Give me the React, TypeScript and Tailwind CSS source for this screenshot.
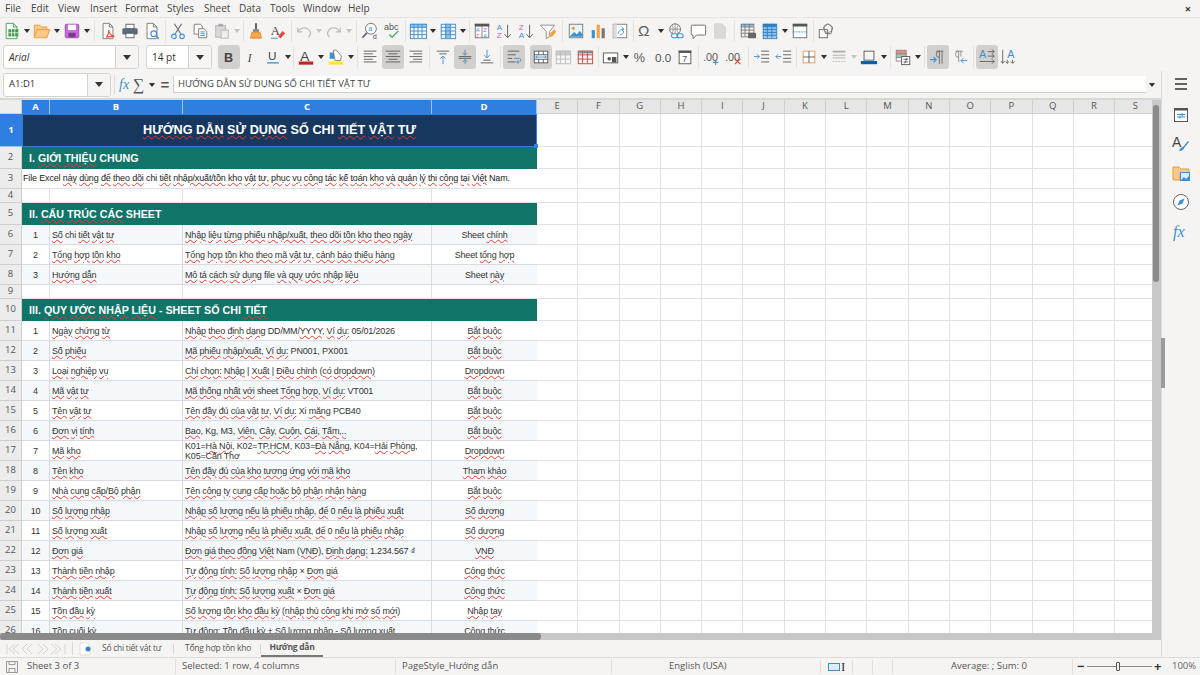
import type { ReactNode } from 'react'

const BLUE = '#3d8fd1'
const GRAY = '#5a5a5a'
const LIGHT = '#bdbdbd'

function Lines({ ys, x1, x2, c = GRAY }: { ys: number[]; x1: number[]; x2: number[]; c?: string }) {
  return (
    <>
      {ys.map((y, i) => (
        <line key={y} x1={x1[i % x1.length]} x2={x2[i % x2.length]} y1={y} y2={y} stroke={c} strokeWidth="1" />
      ))}
    </>
  )
}

function Tbl({ x, y, w, h, c, nx, ny, top }: { x: number; y: number; w: number; h: number; c: string; nx: number; ny: number; top?: string }) {
  const xs = Array.from({ length: nx - 1 }, (_, i) => x + ((i + 1) * w) / nx)
  const ys = Array.from({ length: ny - 1 }, (_, i) => y + ((i + 1) * h) / ny)
  return (
    <g fill="none" stroke={c} strokeWidth="1">
      {top && <rect x={x} y={y} width={w} height={h / ny} fill={top} stroke="none" />}
      <rect x={x + 0.5} y={y + 0.5} width={w} height={h} />
      {xs.map(v => <line key={v} x1={v} x2={v} y1={y} y2={y + h} />)}
      {ys.map(v => <line key={v} x1={x} x2={x + w} y1={v} y2={v} />)}
    </g>
  )
}

const Doc = ({ c = GRAY }: { c?: string }) => <path d="M4.5 1.5h7l4 4v13h-11z M11.5 1.5v4h4" fill="#fff" stroke={c} />

const icons: Record<string, ReactNode> = {
  new: (<><path d="M3.5 1.5h8l4 4v13h-12z M11.5 1.5v4h4" fill="#fff" stroke="#3f9e4d" /><rect x="6" y="8" width="11" height="8" fill="#3f9e4d" /><path d="M9.5 8v8M13 8v8M6 12h11" stroke="#fff" strokeWidth=".8" /></>),
  open: (<path d="M1.5 5.5v-2h6l2 2h6v3h3l-3 9h-14z M1.5 17l3-8.5h14" fill="#f9c98b" stroke="#ee9a3d" />),
  save: (<><rect x="2.5" y="2.5" width="15" height="15" rx="1" fill="#c46bd4" stroke="#a34fb6" /><rect x="5.5" y="3" width="9" height="6" fill="#fff" /><rect x="6" y="12" width="8" height="5" fill="#7d3a8e" /></>),
  pdf: (<><Doc c="#777" /><path d="M8 17c2-2 3-5 3-8 0 3 2 6 6 7-3 0-6 0-9 1z" fill="none" stroke="#e04a3f" strokeWidth="1.2" /></>),
  print: (<><rect x="5.5" y="2.5" width="9" height="5" fill="#fff" stroke={GRAY} /><rect x="1.5" y="7" width="17" height="7" rx="1.5" fill="#5d6a78" /><rect x="5.5" y="12.5" width="9" height="5" fill="#fff" stroke={GRAY} /></>),
  preview: (<><Doc c="#777" /><circle cx="12" cy="13" r="3.2" fill="#fff" stroke={BLUE} strokeWidth="1.3" /><path d="M14.5 15.5l3 3" stroke={BLUE} strokeWidth="1.5" /></>),
  cut: (<><path d="M6 2l7 11M14 2l-7 11" stroke="#667" strokeWidth="1.2" /><circle cx="5.5" cy="16" r="2.5" fill="none" stroke={BLUE} strokeWidth="1.2" /><circle cx="14.5" cy="16" r="2.5" fill="none" stroke={BLUE} strokeWidth="1.2" /></>),
  copy: (<><path d="M3.5 2.5h7l2 2v9h-9z" fill="#fff" stroke="#777" /><path d="M8.5 7.5h6l3 3v7h-9z" fill="#fff" stroke="#777" /><Lines ys={[11, 13, 15]} x1={[10.5]} x2={[15.5]} c={BLUE} /></>),
  paste: (<><rect x="3" y="4" width="11" height="13" fill="#d8d8d8" stroke="#b5b5b5" /><rect x="6" y="2" width="5" height="3" fill="#aaa" /><rect x="9" y="9" width="8" height="9" fill="#eee" stroke="#b5b5b5" /></>),
  clone: (<><path d="M10 1.5v7" stroke="#555" strokeWidth="2" /><rect x="6.5" y="8" width="7" height="3" fill="#888" /><path d="M5.5 11.5h9l1.5 6.5h-12z" fill="#f4a94e" stroke="#e08a2c" /></>),
  clear: (<><text x="2" y="14" fontSize="14" fill="#444" fontFamily="Liberation Serif, serif">A</text><path d="M10 16l5-6 3 2.5-5 5.5z" fill="#e2453c" /><path d="M2 18h8" stroke={BLUE} /></>),
  undo: (<path d="M3 6v5h5M3.5 10.5C7 5 14 5 17 11c.7 2 0 4-2 6" fill="none" stroke={LIGHT} strokeWidth="1.3" />),
  redo: (<path d="M17 6v5h-5M16.5 10.5C13 5 6 5 3 11c-.7 2 0 4 2 6" fill="none" stroke={LIGHT} strokeWidth="1.3" />),
  find: (<><circle cx="11" cy="7.5" r="6" fill="#fff" stroke="#667" /><path d="M6.5 12l-5 5.5" stroke="#667" strokeWidth="2" /><text x="8" y="10.5" fontSize="8" fill={BLUE} fontFamily="Liberation Sans, sans-serif">a</text><text x="13" y="19" fontSize="8" fill="#555" fontFamily="Liberation Sans, sans-serif">d</text></>),
  spell: (<><text x="1" y="9" fontSize="10" fill="#555" fontFamily="Liberation Sans, sans-serif">abc</text><path d="M7 14l3 3 7-7" fill="none" stroke="#4caf6e" strokeWidth="1.5" /></>),
  rows: (<Tbl x={1} y={2} w={18} h={16} c={BLUE} nx={4} ny={4} top="#8fc3ec" />),
  cols: (<><rect x="7" y="2" width="6" height="16" fill="#8fc3ec" /><Tbl x={2} y={2} w={16} h={16} c={BLUE} nx={3} ny={4} /></>),
  sort: (<><rect x="2.5" y="2.5" width="15" height="15" fill="#fff" stroke="#777" /><rect x="2" y="2" width="16" height="3" fill="#555" /><path d="M10 5v13" stroke="#777" /><text x="3" y="11" fontSize="6.5" fill={BLUE} fontFamily="Liberation Sans, sans-serif">A</text><text x="3" y="17.5" fontSize="6.5" fill="#c65bd0" fontFamily="Liberation Sans, sans-serif">Z</text><text x="11.5" y="11" fontSize="6.5" fill="#c65bd0" fontFamily="Liberation Sans, sans-serif">Z</text><text x="11.5" y="17.5" fontSize="6.5" fill={BLUE} fontFamily="Liberation Sans, sans-serif">A</text></>),
  asc: (<><text x="2" y="9" fontSize="9" fill={BLUE} fontFamily="Liberation Sans, sans-serif">A</text><text x="2" y="18" fontSize="9" fill="#c65bd0" fontFamily="Liberation Sans, sans-serif">Z</text><path d="M14 3v14M10.5 13.5l3.5 4 3.5-4" fill="none" stroke={GRAY} /></>),
  desc: (<><text x="2" y="9" fontSize="9" fill="#c65bd0" fontFamily="Liberation Sans, sans-serif">Z</text><text x="2" y="18" fontSize="9" fill={BLUE} fontFamily="Liberation Sans, sans-serif">A</text><path d="M14 3v14M10.5 13.5l3.5 4 3.5-4" fill="none" stroke={GRAY} /></>),
  filter: (<><path d="M1.5 3.5h16l-6 7v6l-3.5 2v-8z" fill="#fff" stroke="#888" /><path d="M17 8l-5 5-1 4 4-1 4-5z" fill="#f0a33e" /></>),
  image: (<><rect x="2.5" y="2.5" width="15" height="15" fill="#eaf4fb" stroke="#777" /><circle cx="7" cy="7" r="1.8" fill="#f0a33e" /><path d="M3 16l5-5 3 3 3-4 3.5 4v2.5h-14.5z" fill={BLUE} /></>),
  chart: (<><rect x="3" y="9" width="3.5" height="9" fill={BLUE} /><rect x="8.5" y="3" width="3.5" height="15" fill="#f0a33e" /><rect x="14" y="7" width="3.5" height="11" fill="#777" /></>),
  pivot: (<><rect x="2.5" y="2.5" width="15" height="15" fill="#fff" stroke="#777" /><rect x="2.5" y="2.5" width="4" height="15" fill="#ddd" /><path d="M8 13c0-3 3-5 6-5M12 6l2.5 2-2.5 2M14 10c0 3-2 4-4 4" fill="none" stroke={BLUE} /></>),
  omega: (<text x="1" y="16" fontSize="17" fill={GRAY} fontFamily="Liberation Sans, sans-serif">Ω</text>),
  link: (<><circle cx="9" cy="8" r="6" fill="#fff" stroke="#666" /><path d="M3 8h12M9 2v12M5.5 3.5c2 3 2 6 0 9M12.5 3.5c-2 3-2 6 0 9" fill="none" stroke="#666" strokeWidth=".7" /><rect x="5" y="13" width="7" height="4.5" rx="2.2" fill="#fff" stroke={BLUE} strokeWidth="1.2" /><rect x="11" y="13" width="7" height="4.5" rx="2.2" fill="none" stroke={BLUE} strokeWidth="1.2" /></>),
  comment: (<path d="M3.5 3.5h14a1 1 0 0 1 1 1v9a1 1 0 0 1-1 1h-9l-4 4v-4h-1a1 1 0 0 1-1-1v-9a1 1 0 0 1 1-1z" fill="#fff" stroke="#666" />),
  note: (<path d="M4 2h8l4 4v12h-12z" fill="#d9d9d9" stroke="#d0d0d0" />),
  printarea: (<><Tbl x={2} y={2} w={14} h={14} c="#777" nx={3} ny={4} top="#8fc3ec" /><rect x="10" y="12" width="9" height="6" rx="1" fill="#666" /></>),
  freeze: (<><rect x="2.5" y="2.5" width="15" height="15" fill="#8fc3ec" /><Tbl x={2} y={2} w={15} h={16} c="#2f7fbf" nx={3} ny={5} /><rect x="2" y="2" width="15" height="3" fill="#2f7fbf" /></>),
  split: (<><rect x="2.5" y="2.5" width="15" height="15" fill="#fff" stroke="#666" /><rect x="2" y="2" width="16" height="3" fill="#555" /><path d="M2 11h16" stroke={BLUE} strokeDasharray="2 1" /></>),
  shapes: (<><rect x="2.5" y="8.5" width="9" height="9" fill="#fff" stroke="#666" /><path d="M12 2l5.5 4-2 7h-6l-2-7z" fill="none" stroke="#666" /><circle cx="12" cy="7" r="4.5" fill="none" stroke="#888" /></>),
  italic: (<text x="6" y="15" fontSize="14" fontStyle="italic" fill="#555" fontFamily="Liberation Serif, serif">I</text>),
  bold: (<text x="4.5" y="15" fontSize="14" fontWeight="700" fill="#444" fontFamily="Liberation Sans, sans-serif">B</text>),
  under: (<><text x="4.5" y="13.5" fontSize="13" fill="#444" fontFamily="Liberation Sans, sans-serif">U</text><path d="M3.5 16.5h13" stroke={BLUE} strokeWidth="1.5" /></>),
  color: (<><text x="3.5" y="14" fontSize="15" fill="#444" fontFamily="Liberation Sans, sans-serif">A</text><rect x="2" y="15" width="16" height="3.5" fill="#c9211e" /></>),
  hl: (<><path d="M3 5h5v7H3z" fill={BLUE} /><path d="M7 3l3-1 6 7-1 5h-6z" fill="#fff" stroke="#777" /><rect x="2" y="15" width="16" height="3.5" fill="#ffe91a" /></>),
  left: (<Lines ys={[3.5, 6.5, 9.5, 12.5, 15.5]} x1={[2]} x2={[16, 12, 16, 12, 16]} />),
  center: (<Lines ys={[3.5, 6.5, 9.5, 12.5, 15.5]} x1={[2, 5]} x2={[18, 15]} />),
  right: (<Lines ys={[3.5, 6.5, 9.5, 12.5, 15.5]} x1={[4, 8]} x2={[18]} />),
  top: (<><Lines ys={[3.5, 6.5]} x1={[3, 6]} x2={[17, 14]} /><path d="M10 18V9M7 12l3-3 3 3" fill="none" stroke={BLUE} /></>),
  mid: (<><Lines ys={[9.5, 11.5]} x1={[3]} x2={[17]} /><path d="M10 2v6M7.5 5.5l2.5 2.5 2.5-2.5M10 18v-5M7.5 15.5l2.5-2.5 2.5 2.5" fill="none" stroke={BLUE} /></>),
  bottom: (<><Lines ys={[13.5, 16.5]} x1={[6, 3]} x2={[14, 17]} /><path d="M10 2v9M7 8l3 3 3-3" fill="none" stroke={BLUE} /></>),
  wrap: (<><Lines ys={[3.5, 7.5, 11.5, 15.5]} x1={[3]} x2={[16, 12, 8, 12]} /><path d="M10 11.5h6c2 0 2 4 0 4h-3M15 13.5l-2 2 2 2" fill="none" stroke={BLUE} /></>),
  merge: (<><rect x="2.5" y="3.5" width="15" height="13" fill="#fff" stroke="#555" /><path d="M2.5 7.5h15M2.5 12.5h15M7.5 3.5v4M12.5 3.5v4M7.5 12.5v4M12.5 12.5v4" stroke="#555" fill="none" /><path d="M4 10h12M6 8.5l-2 1.5 2 1.5M14 8.5l2 1.5-2 1.5" fill="none" stroke={BLUE} /></>),
  mergec: (<Tbl x={2} y={3} w={16} h={14} c="#bbb" nx={3} ny={3} top="#ccc" />),
  unmerge: (<><Tbl x={2} y={3} w={16} h={14} c="#c9403a" nx={3} ny={3} /><rect x="2" y="3" width="16" height="3" fill="#888" /></>),
  currency: (<><rect x="1.5" y="5.5" width="16" height="11" fill="#fff" stroke="#555" /><circle cx="8" cy="12" r="2" fill="#555" /><rect x="11" y="10" width="5" height="6" fill="#555" /></>),
  percent: (<text x="2" y="15" fontSize="14" fill="#555" fontFamily="Liberation Sans, sans-serif">%</text>),
  num: (<text x="1" y="15" fontSize="13" fill="#555" fontFamily="Liberation Sans, sans-serif">0.0</text>),
  date: (<><rect x="3.5" y="3.5" width="13" height="14" fill="#fff" stroke="#555" /><rect x="3" y="3" width="14" height="2.5" fill="#555" /><text x="7" y="15.5" fontSize="10" fill="#555" fontFamily="Liberation Sans, sans-serif">7</text></>),
  addd: (<><text x="0" y="14" fontSize="12" fill="#555" fontFamily="Liberation Sans, sans-serif">.00</text><path d="M14 13v6M11 16h6" stroke={BLUE} strokeWidth="1.2" /></>),
  deld: (<><text x="0" y="14" fontSize="12" fill="#555" fontFamily="Liberation Sans, sans-serif">.00</text><path d="M11 12l6 6M17 12l-6 6" stroke="#d9453c" strokeWidth="1.2" /></>),
  indent: (<><Lines ys={[3.5, 7.5, 11.5, 15.5]} x1={[9]} x2={[18]} /><path d="M1 9.5h6M4.5 7l2.5 2.5-2.5 2.5" fill="none" stroke={BLUE} /></>),
  outdent: (<><Lines ys={[3.5, 7.5, 11.5, 15.5]} x1={[9]} x2={[18]} /><path d="M7 9.5H1M3.5 7L1 9.5 3.5 12" fill="none" stroke={BLUE} /></>),
  borders: (<><rect x="3.5" y="3.5" width="13" height="13" fill="#fff" stroke="#e09a55" /><path d="M3.5 10h13M10 3.5v13" stroke="#555" /></>),
  line: (<><path d="M3 4h14" stroke="#aaa" strokeWidth="2" /><path d="M3 8h14M3 11h14" stroke="#aaa" /><path d="M3 15h14" stroke="#bbb" strokeDasharray="2 1" /></>),
  bcolor: (<><rect x="4.5" y="3.5" width="11" height="10" fill="#f5f4f2" stroke="#555" /><rect x="1" y="14.5" width="18" height="3.5" fill="#0a5ea8" /></>),
  cond: (<><rect x="2.5" y="2.5" width="11" height="4" fill="#e88" stroke="#888" /><rect x="2.5" y="6.5" width="11" height="4" fill="#9c9" stroke="#888" /><rect x="2.5" y="10.5" width="6" height="4" fill="#fff" stroke="#888" /><rect x="8.5" y="9.5" width="9" height="9" fill="#fff" stroke="#555" /><path d="M10.5 12.5h5M10.5 15.5h5M14.5 11l-2.5 6" stroke="#555" /></>),
  ltr: (<><path d="M8 3.5h8M11.5 3.5v14M14.5 3.5v14M11.5 3.5a3.5 3.5 0 0 0 0 7" fill="none" stroke="#666" /><path d="M1 13h7M5 10l3 3-3 3" fill="none" stroke={BLUE} strokeWidth="1.3" /></>),
  rtl: (<><path d="M5 3.5h8M8.5 3.5v12M11 3.5v6M8.5 3.5a3.5 3.5 0 0 0 0 7" fill="none" stroke="#888" /><path d="M18 14h-7M14 11l-3 3 3 3" fill="none" stroke={BLUE} /></>),
  ath: (<><text x="1" y="11" fontSize="12" fill={BLUE} fontFamily="Liberation Sans, sans-serif">A</text><path d="M11 4h7M15.5 1.5l2.5 2.5-2.5 2.5M11 9h7M15.5 6.5l2.5 2.5-2.5 2.5M2 15h16M15.5 12.5l2.5 2.5-2.5 2.5" fill="none" stroke="#555" strokeWidth=".9" /></>),
  atv: (<><text x="8" y="11" fontSize="12" fill={BLUE} fontFamily="Liberation Sans, sans-serif">A</text><path d="M3 2v15M1 14.5l2 2.5 2-2.5M8 13v4M6 15l2 2 2-2M14 13v4M12 15l2 2 2-2" fill="none" stroke="#555" strokeWidth=".9" /></>),
}

function B({ i, on }: { i: string; on?: boolean }) {
  return (
    <div className={on ? 'flex h-[24px] w-[22px] shrink-0 items-center justify-center rounded-[3px] bg-[#d2d0cd]' : 'flex h-[24px] w-[22px] shrink-0 items-center justify-center'}>
      <svg width="18" height="18" viewBox="0 0 20 20">{icons[i]}</svg>
    </div>
  )
}

function Ar({ off }: { off?: boolean }) {
  return (
    <div className="flex h-[24px] w-[8px] shrink-0 items-center justify-center">
      <svg width="6" height="4" viewBox="0 0 6 4"><path d="M0 0h6L3 4z" fill={off ? '#c4c4c4' : '#2e2e2e'} /></svg>
    </div>
  )
}

const sepW: Record<number, string> = { 3: 'w-[3px]', 4: 'w-[4px]', 5: 'w-[5px]', 6: 'w-[6px]' }

function Sep({ w = 4 }: { w?: number }) {
  return (
    <div className={`${sepW[w]} flex shrink-0 justify-center`}>
      <div className="h-[22px] w-px bg-[#e3e2df]" />
    </div>
  )
}

function Combo({ label, textW, italic }: { label: string; textW: string; italic?: boolean }) {
  return (
    <div className="flex h-[24px] shrink-0 overflow-hidden rounded-[3px] border border-[#d5d3d0] bg-white">
      <div className={`${textW} ${italic ? 'italic' : ''} flex items-center pl-[5px] font-['Open_Sans'] text-[10px] text-[#333]`}>{label}</div>
      <div className="flex w-[23px] items-center justify-center border-l border-[#d5d3d0] bg-[#f5f4f2]">
        <svg width="8" height="5" viewBox="0 0 8 5"><path d="M0 0h8L4 5z" fill="#333" /></svg>
      </div>
    </div>
  )
}

const menus: [string, string][] = [
  ['File', 'w-[26px]'], ['Edit', 'w-[27px]'], ['View', 'w-[32px]'], ['Insert', 'w-[35px]'], ['Format', 'w-[42px]'],
  ['Styles', 'w-[37px]'], ['Sheet', 'w-[35px]'], ['Data', 'w-[31px]'], ['Tools', 'w-[33px]'], ['Window', 'w-[45px]'], ['Help', 'w-[30px]'],
]

function Menu() {
  return (
    <div className="flex h-[17px] shrink-0 items-center pl-[5px] pr-[9px] text-[10px] text-[#444]">
      {menus.map(([m, w]) => <span key={m} className={w}>{m}</span>)}
      <span className="ml-auto text-[11px] font-bold leading-none text-[#333]">×</span>
    </div>
  )
}

function Toolbar1() {
  return (
    <div className="flex h-[26px] shrink-0 items-center border-t border-[#e6e5e2] pl-px">
      <B i="new" /><Ar /><B i="open" /><Ar /><B i="save" /><Ar /><Sep w={6} />
      <B i="pdf" /><B i="print" /><B i="preview" /><Sep />
      <B i="cut" /><B i="copy" /><B i="paste" /><Ar off /><Sep />
      <B i="clone" /><B i="clear" /><Sep />
      <B i="undo" /><Ar off /><B i="redo" /><Ar off /><Sep w={6} />
      <B i="find" /><B i="spell" /><Sep />
      <B i="rows" /><Ar /><B i="cols" /><Ar /><Sep />
      <B i="sort" /><B i="asc" /><B i="desc" /><B i="filter" /><Sep w={6} />
      <B i="image" /><B i="chart" /><B i="pivot" /><Sep />
      <B i="omega" /><Ar /><B i="link" /><B i="comment" /><B i="note" /><Sep w={6} />
      <B i="printarea" /><B i="freeze" /><Ar /><B i="split" /><Sep />
      <B i="shapes" />
    </div>
  )
}

function Toolbar2() {
  return (
    <div className="flex h-[28px] shrink-0 items-center pl-[3px]">
      <Combo label="Arial" textW="w-[111px]" italic />
      <div className="w-[7px]" />
      <Combo label="14 pt" textW="w-[41px]" />
      <div className="w-[6px]" />
      <B i="bold" on /><B i="italic" /><B i="under" /><Ar /><Sep w={3} />
      <B i="color" /><Ar /><B i="hl" /><Ar /><Sep w={5} />
      <B i="left" /><B i="center" on /><B i="right" /><Sep w={6} />
      <B i="top" /><B i="mid" on /><B i="bottom" /><Sep w={5} />
      <B i="wrap" on /><div className="w-[5px]" /><B i="merge" on /><B i="mergec" /><B i="unmerge" /><Sep />
      <B i="currency" /><Ar /><B i="percent" /><B i="num" /><B i="date" /><Sep w={5} />
      <B i="addd" /><B i="deld" /><Sep w={6} />
      <B i="indent" /><B i="outdent" /><Sep w={3} />
      <B i="borders" /><Ar /><B i="line" /><Ar off /><B i="bcolor" /><Ar /><Sep />
      <B i="cond" /><Ar /><Sep w={5} />
      <B i="ltr" on /><B i="rtl" /><Sep w={5} />
      <B i="ath" on /><B i="atv" />
    </div>
  )
}

function FormulaBar() {
  return (
    <div className="flex h-[27px] shrink-0 items-center pl-[3px]">
      <div className="flex h-[24px] w-[108px] overflow-hidden rounded-[3px] border border-[#d5d3d0] bg-white">
        <div className="flex flex-1 items-center pl-[5px] text-[9.5px] text-[#333]">A1:D1</div>
        <div className="flex w-[23px] items-center justify-center border-l border-[#d5d3d0] bg-[#f5f4f2]">
          <svg width="8" height="5" viewBox="0 0 8 5"><path d="M0 0h8L4 5z" fill="#333" /></svg>
        </div>
      </div>
      <div className="ml-[3px] h-[20px] w-px bg-[#dfdedb]" />
      <span className="ml-[4px] w-[14px] font-['Liberation_Serif'] text-[14px] italic leading-none text-[#3d8fd1]">fx</span>
      <span className="w-[11px] font-['Liberation_Serif'] text-[16px] leading-none text-[#555]">∑</span>
      <div className="ml-[4px]"><Ar /></div>
      <span className="ml-[3px] w-[12px] text-center font-['Liberation_Sans'] text-[15px] font-bold leading-none text-[#555]">=</span>
      <div className="ml-[2px] flex h-[17px] w-[973px] items-center border-b border-l border-[#d0cfcc] bg-white pl-[4px] text-[9.5px] text-[#444]">
        HƯỚNG DẪN SỬ DỤNG SỐ CHI TIẾT VẬT TƯ
      </div>
      <div className="ml-[2px]"><Ar /></div>
    </div>
  )
}

const plain = new Set(['File', 'Excel', 'file', 'Sheet', 'sheet', 'SHEET', 'CHI', 'CHUNG', 'I.', 'II.', 'III.', 'Kg,', 'M3,', 'chi', '|', '-', '+', '×', 'PN001,', 'PX001', 'VT001', 'PCB40', 'Xi', '05/01/2026', '1.234.567', '0', 'Nam', '₫', 'SỐ', 'Nam.'])

const squiggle = 'underline decoration-[#e23b32] decoration-wavy decoration-[0.6px] underline-offset-[1px]'

function Word({ w }: { w: string }) {
  const m = w.match(/^(K0\d=|DD\/MM\/)(.+)$/)
  if (m) return <>{m[1]}<span className={squiggle}>{m[2]}</span></>
  return plain.has(w) ? <>{w}</> : <span className={squiggle}>{w}</span>
}

function Wavy({ text }: { text: string }) {
  return (
    <>
      {text.split(' ').map((w, i) => (
        <span key={i}>
          {i > 0 && ' '}
          <Word w={w} />
        </span>
      ))}
    </>
  )
}

const rowsA: [string, string, string, string][] = [
  ['1', 'Số chi tiết vật tư', 'Nhập liệu từng phiếu nhập/xuất, theo dõi tồn kho theo ngày', 'Sheet chính'],
  ['2', 'Tổng hợp tồn kho', 'Tổng hợp tồn kho theo mã vật tư, cảnh báo thiếu hàng', 'Sheet tổng hợp'],
  ['3', 'Hướng dẫn', 'Mô tả cách sử dụng file và quy ước nhập liệu', 'Sheet này'],
]

const rowsB: [string, string, string, string][] = [
  ['1', 'Ngày chứng từ', 'Nhập theo định dạng DD/MM/YYYY, Ví dụ: 05/01/2026', 'Bắt buộc'],
  ['2', 'Số phiếu', 'Mã phiếu nhập/xuất, Ví dụ: PN001, PX001', 'Bắt buộc'],
  ['3', 'Loại nghiệp vụ', 'Chỉ chọn: Nhập | Xuất | Điều chỉnh (có dropdown)', 'Dropdown'],
  ['4', 'Mã vật tư', 'Mã thống nhất với sheet Tổng hợp, Ví dụ: VT001', 'Bắt buộc'],
  ['5', 'Tên vật tư', 'Tên đầy đủ của vật tư, Ví dụ: Xi măng PCB40', 'Bắt buộc'],
  ['6', 'Đơn vị tính', 'Bao, Kg, M3, Viên, Cây, Cuộn, Cái, Tấm,..', 'Bắt buộc'],
  ['7', 'Mã kho', 'K01=Hà Nội, K02=TP.HCM, K03=Đà Nẵng, K04=Hải Phòng, K05=Cần Thơ', 'Dropdown'],
  ['8', 'Tên kho', 'Tên đầy đủ của kho tương ứng với mã kho', 'Tham khảo'],
  ['9', 'Nhà cung cấp/Bộ phận', 'Tên công ty cung cấp hoặc bộ phận nhận hàng', 'Bắt buộc'],
  ['10', 'Số lượng nhập', 'Nhập số lượng nếu là phiếu nhập, để 0 nếu là phiếu xuất', 'Số dương'],
  ['11', 'Số lượng xuất', 'Nhập số lượng nếu là phiếu xuất, để 0 nếu là phiếu nhập', 'Số dương'],
  ['12', 'Đơn giá', 'Đơn giá theo đồng Việt Nam (VNĐ), Định dạng: 1.234.567 ₫', 'VNĐ'],
  ['13', 'Thành tiền nhập', 'Tự động tính: Số lượng nhập × Đơn giá', 'Công thức'],
  ['14', 'Thành tiền xuất', 'Tự động tính: Số lượng xuất × Đơn giá', 'Công thức'],
  ['15', 'Tồn đầu kỳ', 'Số lượng tồn kho đầu kỳ (nhập thủ công khi mở sổ mới)', 'Nhập tay'],
  ['16', 'Tồn cuối kỳ', 'Tự động: Tồn đầu kỳ + Số lượng nhập - Số lượng xuất', 'Công thức'],
]

const emptyCols = ['E', 'F', 'G', 'H', 'I', 'J', 'K', 'L', 'M', 'N', 'O', 'P', 'Q', 'R', 'S']

function Rest() {
  return (
    <div className="flex flex-1">
      {emptyCols.map(c => <div key={c} className="w-[41.3px] shrink-0 border-r border-b border-[#e2e2e2]" />)}
    </div>
  )
}

function RowNum({ n, on }: { n: number; on?: boolean }) {
  return (
    <div className={on
      ? 'flex w-[22px] shrink-0 items-center justify-center border-b border-[#9cc3f0] bg-[#2f7fe0] pt-px text-[9.5px] font-bold text-white'
      : 'flex w-[22px] shrink-0 items-center justify-center border-r border-b border-[#cfcfcf] bg-[#ececec] text-[9.5px] text-[#555]'}>
      {n}
    </div>
  )
}

function DataRow({ n, r, tint }: { n: number; r: [string, string, string, string]; tint: boolean }) {
  const bg = tint ? 'bg-[#f5f8fb]' : 'bg-white'
  return (
    <div className="flex h-[20px] shrink-0">
      <RowNum n={n} />
      <div className={`flex w-[515px] shrink-0 font-['Liberation_Sans'] text-[9px] leading-[10px] tracking-[-0.17px] text-[#333] ${bg}`}>
        <div className="flex w-[28px] shrink-0 items-center justify-center border-r border-b border-[#d8dce2]">{r[0]}</div>
        <div className="flex w-[133px] shrink-0 items-center border-r border-b border-[#d8dce2] pl-[2px]"><span><Wavy text={r[1]} /></span></div>
        <div className="flex w-[249px] shrink-0 items-center border-r border-b border-[#d8dce2] pl-[2px]"><span><Wavy text={r[2]} /></span></div>
        <div className="flex w-[105px] shrink-0 items-center justify-center border-b border-[#d8dce2]"><span><Wavy text={r[3]} /></span></div>
      </div>
      <Rest />
    </div>
  )
}

function Section({ n, text }: { n: number; text: string }) {
  return (
    <div className="flex h-[22px] shrink-0">
      <RowNum n={n} />
      <div className="flex w-[515px] shrink-0 items-center bg-[#117468] pl-[7px] font-['Liberation_Sans'] text-[10.7px] font-bold text-white"><span><Wavy text={text} /></span></div>
      <Rest />
    </div>
  )
}

function Spacer({ n }: { n: number }) {
  return (
    <div className="flex h-[14px] shrink-0">
      <RowNum n={n} />
      <div className="flex w-[515px] shrink-0 bg-white">
        <div className="w-[28px] border-r border-b border-[#e2e2e2]" />
        <div className="w-[133px] border-r border-b border-[#e2e2e2]" />
        <div className="w-[249px] border-r border-b border-[#e2e2e2]" />
        <div className="w-[105px] border-b border-[#e2e2e2]" />
      </div>
      <Rest />
    </div>
  )
}

function Sheet() {
  return (
    <div className="flex min-w-0 flex-1 flex-col overflow-hidden bg-white">
      <div className="flex h-[14px] shrink-0 text-[9.5px]">
        <div className="w-[22px] shrink-0 border-r border-b border-[#cfcfcf] bg-[#eeeeee]" />
        {[['A', 'w-[28px]'], ['B', 'w-[133px]'], ['C', 'w-[249px]'], ['D', 'w-[105px]']].map(([c, w]) => (
          <div key={c} className={`${w} flex shrink-0 items-center justify-center border-r border-[#9cc3f0] bg-[#2f7fe0] font-bold text-white`}>{c}</div>
        ))}
        {emptyCols.map(c => (
          <div key={c} className="flex w-[41.3px] shrink-0 items-center justify-center border-r border-b border-[#cfcfcf] bg-[#e6e6e6] text-[#555]">{c}</div>
        ))}
      </div>
      <div className="flex h-[33px] shrink-0">
        <RowNum n={1} on />
        <div className="relative flex w-[515px] shrink-0 items-center justify-center border border-[#2f7fe0] bg-[#17375e] pt-px font-['Liberation_Sans'] text-[12.7px] font-bold text-white">
          <span><Wavy text="HƯỚNG DẪN SỬ DỤNG SỐ CHI TIẾT VẬT TƯ" /></span>
          <div className="absolute -right-[2px] -bottom-[2px] h-[4px] w-[4px] bg-[#2f7fe0]" />
        </div>
        <Rest />
      </div>
      <Section n={2} text="I. GIỚI THIỆU CHUNG" />
      <div className="flex h-[20px] shrink-0">
        <RowNum n={3} />
        <div className="flex w-[515px] shrink-0 items-center whitespace-nowrap border-b border-[#e2e2e2] pl-[1px] font-['Liberation_Sans'] text-[9px] tracking-[-0.16px] text-[#222]">
          <span><Wavy text="File Excel này dùng để theo dõi chi tiết nhập/xuất/tồn kho vật tư, phục vụ công tác kế toán kho và quản lý thi công tại Việt Nam." /></span>
        </div>
        <Rest />
      </div>
      <Spacer n={4} />
      <Section n={5} text="II. CẤU TRÚC CÁC SHEET" />
      {rowsA.map((r, i) => <DataRow key={r[0]} n={6 + i} r={r} tint={i % 2 === 0} />)}
      <Spacer n={9} />
      <Section n={10} text="III. QUY ƯỚC NHẬP LIỆU - SHEET SỐ CHI TIẾT" />
      {rowsB.map((r, i) => <DataRow key={r[0]} n={11 + i} r={r} tint={i % 2 === 1} />)}
    </div>
  )
}

function SideIcon({ children }: { children: ReactNode }) {
  return <svg width="20" height="20" viewBox="0 0 20 20" className="shrink-0">{children}</svg>
}

function Sidebar() {
  return (
    <div className="relative flex w-[39px] shrink-0 flex-col items-center gap-[9px] border-l border-[#dddcd9] pt-[3px]">
      <div className="absolute -left-px top-[267px] h-[50px] w-[4px] bg-[#9a9a9a]" />
      <SideIcon><path d="M4 5h12M4 10h12M4 15h12" stroke="#333" strokeWidth="1.6" /></SideIcon>
      <div className="mt-[2px]">
        <SideIcon><rect x="3.5" y="3.5" width="13" height="13" fill="#fff" stroke="#555" /><rect x="3" y="3" width="14" height="2.5" fill="#555" /><path d="M6 9.5h8M6 12h8" stroke="#3d8fd1" /><path d="M11 8v3M9 10.5v3" stroke="#3d8fd1" /></SideIcon>
      </div>
      <SideIcon><text x="1" y="13" fontSize="14" fill="#444" fontFamily="Liberation Sans, sans-serif">A</text><path d="M8 17c1-3 3-4 4-4l5-6 1 1-5 6c0 2-3 3-5 3z" fill="#3d8fd1" /></SideIcon>
      <SideIcon><path d="M2 4h6l2 2h8v4H9v7H2z" fill="#f9c98b" stroke="#ee9a3d" /><rect x="9.5" y="9.5" width="9" height="8" fill="#dcecf8" stroke="#3d8fd1" /><path d="M10 17l3-3 2 2 3-3v4z" fill="#3d8fd1" /></SideIcon>
      <SideIcon><circle cx="10" cy="10" r="7.5" fill="#fff" stroke="#666" /><path d="M13.5 6.5l-2 5-5 2 2-5z" fill="#3d8fd1" /></SideIcon>
      <SideIcon><text x="2" y="16" fontSize="16" fontStyle="italic" fill="#3d8fd1" fontFamily="Liberation Serif, serif">fx</text></SideIcon>
    </div>
  )
}

function Tabs() {
  return (
    <div className="flex h-[17px] shrink-0 items-center whitespace-nowrap text-[8.5px] tracking-[-0.25px] text-[#555]">
      <div className="flex w-[72px] shrink-0 items-center justify-center pl-[2px]">
        <svg width="64" height="12" viewBox="0 0 64 12">
          <path d="M2 1v10M10 1L4 6l6 5M14 1L8 6l6 5M22 1l-5 5 5 5M27 1l-5 5 5 5M33 1l5 5-5 5M38 1l5 5-5 5M46 1l6 5-6 5M50 1l6 5-6 5M60 1v10" fill="none" stroke="#d2d2d2" />
        </svg>
      </div>
      <div className="h-[13px] w-px bg-[#d8d8d8]" />
      <div className="flex w-[24px] items-center justify-center">
        <svg width="12" height="14" viewBox="0 0 12 14"><path d="M1 1h7l3 3v9H1z" fill="#fff" stroke="#ddd" /><circle cx="9" cy="7" r="2.5" fill="#3d7fc9" /></svg>
      </div>
      <span className="w-[76px] shrink-0 pl-[5px]">Số chi tiết vật tư</span>
      <div className="h-[10px] w-px bg-[#d8d8d8]" />
      <span className="w-[86px] shrink-0 pl-[11px]">Tổng hợp tồn kho</span>
      <div className="h-[10px] w-px bg-[#d8d8d8]" />
      <div className="flex h-[17px] w-[62px] shrink-0 items-center justify-center border-b-2 border-[#777] font-bold">Hướng dẫn</div>
    </div>
  )
}

function Status() {
  return (
    <div className="flex h-[18px] shrink-0 items-center border-t border-[#dcdbd8] text-[9.5px] text-[#555]">
      <div className="flex w-[175px] shrink-0 items-center pl-[6px]">
        <svg width="12" height="12" viewBox="0 0 12 12"><path d="M.5.5h11v11H.5z" fill="none" stroke="#999" /><path d="M3 .5v3h6v-3M3 11.5v-4h6v4" fill="none" stroke="#999" /></svg>
        <span className="ml-[9px]">Sheet 3 of 3</span>
      </div>
      <div className="w-[220px] shrink-0 border-l border-[#e0dfdc] pl-[6px]">Selected: 1 row, 4 columns</div>
      <div className="w-[216px] shrink-0 border-l border-[#e0dfdc] pl-[6px]">PageStyle_Hướng dẫn</div>
      <div className="w-[209px] shrink-0 border-l border-[#e0dfdc] pl-[57px]">English (USA)</div>
      <div className="flex w-[32px] shrink-0 items-center gap-[1px] border-l border-[#e0dfdc] pl-[7px]">
        <svg width="12" height="8" viewBox="0 0 12 8"><rect x=".5" y=".5" width="11" height="7" fill="#dcecf8" stroke="#3d8fd1" /></svg>
        <span className="font-['Liberation_Serif'] text-[13px] leading-none text-[#333]">I</span>
      </div>
      <div className="h-[14px] w-[20px] shrink-0 border-l border-[#e0dfdc]" />
      <div className="h-[14px] w-[20px] shrink-0 border-l border-[#e0dfdc]" />
      <div className="w-[180px] shrink-0 border-l border-[#e0dfdc] pl-[58px]">Average: ; Sum: 0</div>
      <div className="flex flex-1 items-center border-l border-[#e0dfdc] pl-[4px] text-[#333]">
        <span className="w-[9px] text-[13px] font-bold leading-none">−</span>
        <div className="relative ml-px h-px w-[65px] bg-[#888]">
          <div className="absolute left-[29px] -top-[4px] h-[9px] w-[4px] rounded-[1px] border border-[#555] bg-[#f5f4f2]" />
        </div>
        <span className="ml-[2px] w-[18px] text-[13px] font-bold leading-none">+</span>
        <span className="text-[9.5px] text-[#666]">100%</span>
      </div>
    </div>
  )
}

export default function App() {
  return (
    <div className="flex h-[675px] w-[1200px] flex-col overflow-hidden bg-[#f5f4f2] font-['Open_Sans',sans-serif]">
      <Menu />
      <Toolbar1 />
      <Toolbar2 />
      <div className="flex min-h-0 flex-1">
        <div className="flex w-[1161px] shrink-0 flex-col">
          <FormulaBar />
          <div className="flex h-[535px] shrink-0 flex-col border-t-2 border-[#d8d7d4]">
            <div className="flex min-h-0 flex-1">
              <Sheet />
              <div className="w-[9px] shrink-0 bg-[#c8c8c8] pl-px pt-[5px]">
                <div className="h-[177px] w-[6px] rounded-[3px] bg-[#8a8a8a]" />
              </div>
            </div>
          </div>
          <div className="flex h-[7px] shrink-0 bg-[#c8c8c8] pr-[9px]">
            <div className="h-[7px] w-[541px] rounded-[3px] bg-[#8a8a8a]" />
          </div>
          <Tabs />
        </div>
        <Sidebar />
      </div>
      <Status />
    </div>
  )
}
